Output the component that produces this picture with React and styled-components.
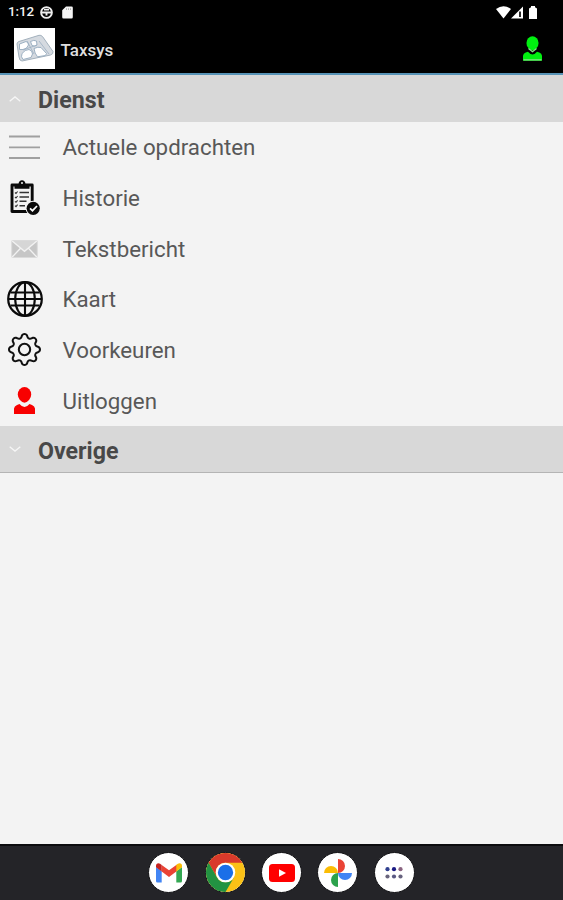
import styled, { createGlobalStyle } from 'styled-components';
import { BsGear } from 'react-icons/bs';

const GlobalStyle = createGlobalStyle`
	* {
		box-sizing: border-box;
	}

	body {
		margin: 0;
		background-color: #f3f3f3;
		font-family: Roboto, 'Noto Sans', sans-serif;
	}

	svg {
		display: block;
		flex: none;
	}
`;

const Screen = styled.div`
	display: flex;
	flex-direction: column;
	height: 900px;
	background-color: #f3f3f3;
`;

const StatusBar = styled.div`
	display: flex;
	justify-content: space-between;
	align-items: center;
	height: 24px;
	padding: 0 26px 0 8px;
	background-color: #000;
	color: #f2f2f2;
`;

const StatusGroup = styled.div`
	display: flex;
	align-items: center;
	gap: ${({ $gap }) => $gap}px;
`;

const Clock = styled.span`
	width: 26px;
	font-size: 13.4px;
	font-weight: 500;
	letter-spacing: -0.1px;
	line-height: 24px;
	white-space: nowrap;
`;

const AppBar = styled.header`
	display: flex;
	align-items: center;
	height: 51px;
	padding: 0 21px 0 14px;
	background-color: #000;
	border-bottom: 2px solid #5793b6;
`;

const AppTitle = styled.h1`
	flex: 1;
	margin: 3px 0 0 5.5px;
	color: #dedede;
	font-size: 17px;
	font-weight: 500;
	line-height: 24px;
`;

const Content = styled.main`
	flex: 1;
`;

const GroupHeader = styled.div`
	display: flex;
	align-items: center;
	height: ${({ $height }) => $height}px;
	padding-left: 9px;
	background-color: #d8d8d8;
	border-bottom: ${({ $line }) => ($line ? '1.5px solid #b4b4b4' : 'none')};
`;

const GroupTitle = styled.h2`
	margin: 3px 0 0 17px;
	color: #484848;
	font-size: 23.2px;
	font-weight: 700;
	line-height: 30px;
`;

const MenuList = styled.ul`
	margin: 0;
	padding: 0;
	list-style: none;
`;

const MenuItem = styled.li`
	display: flex;
	align-items: center;
	height: 50.67px;
`;

const IconSlot = styled.span`
	display: flex;
	justify-content: center;
	align-items: center;
	width: 49px;
	height: 40px;
`;

const MenuLabel = styled.span`
	margin-left: 13.5px;
	color: #585858;
	font-size: 22.3px;
	line-height: 30px;
`;

const Dock = styled.nav`
	display: flex;
	justify-content: center;
	gap: 15.3px;
	height: 56px;
	padding-top: 6px;
	background-color: #242428;
	border-top: 2px solid #0c0c0e;
`;

const DockButton = styled.span`
	display: flex;
	justify-content: center;
	align-items: center;
	width: 41px;
	height: 41px;
	border: 1px solid #111114;
	border-radius: 50%;
	background-color: #fff;
`;

const PersonIcon = ({ color, shade, width = 21, height = 27 }) => (
	<svg width={width} height={height} viewBox='0 0 21 27'>
		<ellipse cx='10.5' cy='7.4' rx='6.7' ry='7.4' fill={color} />
		<path d='M6 12.5Q10.5 19 15 12.5Z' fill={color} />
		<path d='M0 27V21.5Q.3 19 3 18L5.5 17Q10.5 23 15.5 17L18 18Q20.7 19 21 21.5V27Z' fill={color} />
		{shade && <path d='M6 13.5L10.5 17L15 13.5M.5 26.2H20.5' fill='none' stroke={shade} strokeWidth='1.4' />}
	</svg>
);

const SyncIcon = () => (
	<svg width='13' height='13' viewBox='0 0 13 13' fill='none' stroke='#eee' strokeWidth='1.9'>
		<circle cx='6.5' cy='6.5' r='5.4' />
		<path d='M1 6.5H12M4 3.6H9M6.5 7V9.5' />
	</svg>
);

const CardIcon = () => (
	<svg width='11' height='13' viewBox='0 0 11 13'>
		<path d='M4 .5H9.5Q10.8.5 10.8 1.8V11Q10.8 12.5 9.5 12.5H1.5Q.2 12.5.2 11V4.3Z' fill='#f5f5f5' />
		<path d='M4.5 2.2V4M6.5 2.2V4M8.5 2.2V4' stroke='#999' strokeWidth='.7' />
	</svg>
);

const WifiIcon = () => (
	<svg width='15' height='13' viewBox='0 0 15 13'>
		<path d='M0 3Q7.5-2.5 15 3L7.5 12.5Z' fill='#fff' />
	</svg>
);

const SignalIcon = () => (
	<svg width='12' height='13' viewBox='0 0 12 13'>
		<path d='M0 12.5L12 .5V12.5Z' fill='#fff' />
		<path d='M9 5.5V11' stroke='#111' strokeWidth='1.8' />
	</svg>
);

const BatteryIcon = () => (
	<svg width='8' height='13' viewBox='0 0 8 13'>
		<path d='M2 0H6V1.3L8 2.5V13H0V2.5L2 1.3Z' fill='#fff' />
	</svg>
);

const LogoIcon = () => (
	<svg width='41' height='41' viewBox='0 0 41 41'>
		<rect width='41' height='41' fill='#fff' />
		<path d='M3 16Q3 14 5 13.5L25 7.3Q27 7 28.5 8.5L39 23.5Q39.5 26 36.5 27L8 33Q5.5 33 5 29Z' fill='#d5dae0' stroke='#a3b1bd' />
		<g fill='#fff' stroke='#9cb0c2' strokeWidth='1'>
			<path d='M5.5 16L12 13.5Q14.5 14 14.5 17Q13 21 9 21.5L5.5 21.5Z' />
			<path d='M16.5 13.5Q20 11.5 22.5 13L23 17Q21 19 18 17.5Z' />
			<path d='M8 25.5Q11 21.5 15 21.5Q18.5 22.5 18.5 26L17 29.5L9 31.5Q6.5 29 8 25.5Z' />
			<path d='M20 20.5Q24 18.5 27 19.5L32.5 25.5L31.5 27.5L23.5 28.8Q20.5 25.5 20 20.5Z' />
		</g>
		<path d='M13 13L20 26M25 13L35 26M9 22L23 17' fill='none' stroke='#9bafc1' strokeWidth='.8' />
	</svg>
);

const Chevron = ({ up }) => (
	<svg width='12' height='6' viewBox='0 0 12 6' fill='none' stroke='#f6f6f6' strokeWidth='1.3'>
		<path d={up ? 'M.7 5.3L6 .9L11.3 5.3' : 'M.7.7L6 5.1L11.3.7'} />
	</svg>
);

const LinesIcon = () => (
	<svg width='31' height='25' viewBox='0 0 31 25' stroke='#a0a0a0' strokeWidth='1.8'>
		<path d='M0 1.5H31M0 12.3H31M0 23H31' />
	</svg>
);

const ClipboardIcon = () => (
	<svg width='30' height='35' viewBox='0 0 30 35'>
		<path d='M2 5H22.2V31.5H2Z' fill='#f3f3f3' stroke='#0a0a0a' strokeWidth='2.9' strokeLinejoin='round' />
		<path d='M4.5 8.8V6Q4.5 4 6.5 4H8.5Q9 .3 12 .3T15.5 4H17.5Q19.5 4 19.5 6V8.8Z' fill='#0a0a0a' />
		<circle cx='12' cy='3' r='1' fill='#f3f3f3' />
		<path d='M9.5 12.5H19M9.5 17H19M9.5 21.3H16.5M9.5 25.7H15' stroke='#333' strokeWidth='1.6' />
		<path d='M5 12.5L6 13.5L7.6 11.5M5 17L6 18L7.6 16M5 21.3L6 22.3L7.6 20.3M5 25.7L6 26.7L7.6 24.7' fill='none' stroke='#333' strokeWidth='1.1' />
		<circle cx='23.2' cy='28.3' r='7.6' fill='#f3f3f3' />
		<circle cx='23.2' cy='28.3' r='6.6' fill='#0a0a0a' />
		<path d='M20 28.3L22.5 30.7L27 26' fill='none' stroke='#fff' strokeWidth='1.7' />
	</svg>
);

const MailIcon = () => (
	<svg width='27' height='18' viewBox='0 0 28 19'>
		<rect x='.5' y='.5' width='27' height='18' rx='1' fill='#c6c6c6' stroke='#dadada' />
		<path d='M1 1H27L14 11.5Z' fill='#d6d6d6' />
		<path d='M1 1L14 12L27 1M1 18L9.8 8.7M27 18L18.2 8.7' fill='none' stroke='#f2f2f2' strokeWidth='1.4' />
	</svg>
);

const GlobeIcon = () => (
	<svg width='36' height='36' viewBox='0 0 36 36' fill='none' stroke='#0a0a0a' strokeWidth='2.1'>
		<circle cx='18' cy='18' r='16.8' strokeWidth='2.2' />
		<ellipse cx='18' cy='18' rx='9.8' ry='16.6' />
		<path d='M18 1V35M3.5 11.5H32.5M1 18H35M3.5 24.5H32.5' />
	</svg>
);

const GmailIcon = () => (
	<svg width='26' height='20' viewBox='0 0 26 20'>
		<path d='M0 4V18Q0 19.5 1.5 19.5H5.7V8.2Z' fill='#4285f4' />
		<path d='M20.3 8.2V19.5H24.5Q26 19.5 26 18V4Z' fill='#34a853' />
		<path d='M20 2V8.7L26 4.3V3Q26 .2 23.5.2Q22 .2 20 2Z' fill='#fbbc04' />
		<path d='M5.7 8.5V2L13 7.2L20.3 2V8.5L13 13.9Z' fill='#ea4335' />
		<path d='M0 3V4.3L5.7 8.5V2Q4 .2 2.5.2Q0 .2 0 3Z' fill='#c5221f' />
	</svg>
);

const ChromeIcon = () => (
	<svg width='39' height='39' viewBox='0 0 48 48'>
		<circle cx='24' cy='24' r='24' fill='#fbc116' />
		<path d='M3.22 12A24 24 0 0 1 44.78 12H24A12 12 0 0 0 13.6 30Z' fill='#d93a2b' />
		<path d='M3.22 12L13.6 30A12 12 0 0 0 34.4 30L24 48A24 24 0 0 1 3.22 12Z' fill='#229342' />
		<circle cx='24' cy='24' r='12' fill='#fff' />
		<circle cx='24' cy='24' r='9.4' fill='#1a6fe8' />
	</svg>
);

const YoutubeIcon = () => (
	<svg width='26' height='18' viewBox='0 0 26 18'>
		<rect width='26' height='18' rx='3.5' fill='#f00' />
		<path d='M10 5.2L17 9L10 12.8Z' fill='#fff' />
	</svg>
);

const PhotosIcon = () => (
	<svg width='28' height='28' viewBox='0 0 28 28'>
		<path d='M14 0A7 7 0 0 1 14 14Z' fill='#ea4335' />
		<path d='M28 14A7 7 0 0 1 14 14Z' fill='#4285f4' />
		<path d='M14 28A7 7 0 0 1 14 14Z' fill='#2ca24c' />
		<path d='M0 14A7 7 0 0 1 14 14Z' fill='#fbbc04' />
	</svg>
);

const AppsIcon = () => (
	<svg width='18' height='12' viewBox='0 0 18 12'>
		<circle cx='2.5' cy='2.2' r='2.1' fill='#30408f' />
		<circle cx='9' cy='2.2' r='2.1' fill='#1b1b83' />
		<circle cx='15.5' cy='2.2' r='2.1' fill='#8a6480' />
		<circle cx='2.5' cy='9.5' r='2.1' fill='#68647c' />
		<circle cx='9' cy='9.5' r='2.1' fill='#5a5983' />
		<circle cx='15.5' cy='9.5' r='2.1' fill='#66627e' />
	</svg>
);

const menuItems = [
	{ label: 'Actuele opdrachten', icon: <LinesIcon /> },
	{ label: 'Historie', icon: <ClipboardIcon /> },
	{ label: 'Tekstbericht', icon: <MailIcon /> },
	{ label: 'Kaart', icon: <GlobeIcon /> },
	{ label: 'Voorkeuren', icon: <BsGear size={33} color='#111' /> },
	{ label: 'Uitloggen', icon: <PersonIcon color='#f80000' /> },
];

const dockIcons = [GmailIcon, ChromeIcon, YoutubeIcon, PhotosIcon, AppsIcon];

const App = () => (
	<>
		<GlobalStyle />
		<Screen>
			<StatusBar>
				<StatusGroup $gap={6}>
					<Clock>1:12</Clock>
					<StatusGroup $gap={9}>
						<SyncIcon />
						<CardIcon />
					</StatusGroup>
				</StatusGroup>
				<StatusGroup $gap={6}>
					<StatusGroup $gap={0}>
						<WifiIcon />
						<SignalIcon />
					</StatusGroup>
					<BatteryIcon />
				</StatusGroup>
			</StatusBar>
			<AppBar>
				<LogoIcon />
				<AppTitle>Taxsys</AppTitle>
				<PersonIcon color='#00f010' shade='#8ce08c' width={19} height={25} />
			</AppBar>
			<Content>
				<GroupHeader $height={47}>
					<Chevron up />
					<GroupTitle>Dienst</GroupTitle>
				</GroupHeader>
				<MenuList>
					{menuItems.map(({ label, icon }) => (
						<MenuItem key={label}>
							<IconSlot>{icon}</IconSlot>
							<MenuLabel>{label}</MenuLabel>
						</MenuItem>
					))}
				</MenuList>
				<GroupHeader $height={47.5} $line>
					<Chevron />
					<GroupTitle>Overige</GroupTitle>
				</GroupHeader>
			</Content>
			<Dock>
				{dockIcons.map((Icon) => (
					<DockButton key={Icon.name}>
						<Icon />
					</DockButton>
				))}
			</Dock>
		</Screen>
	</>
);

export default App;
